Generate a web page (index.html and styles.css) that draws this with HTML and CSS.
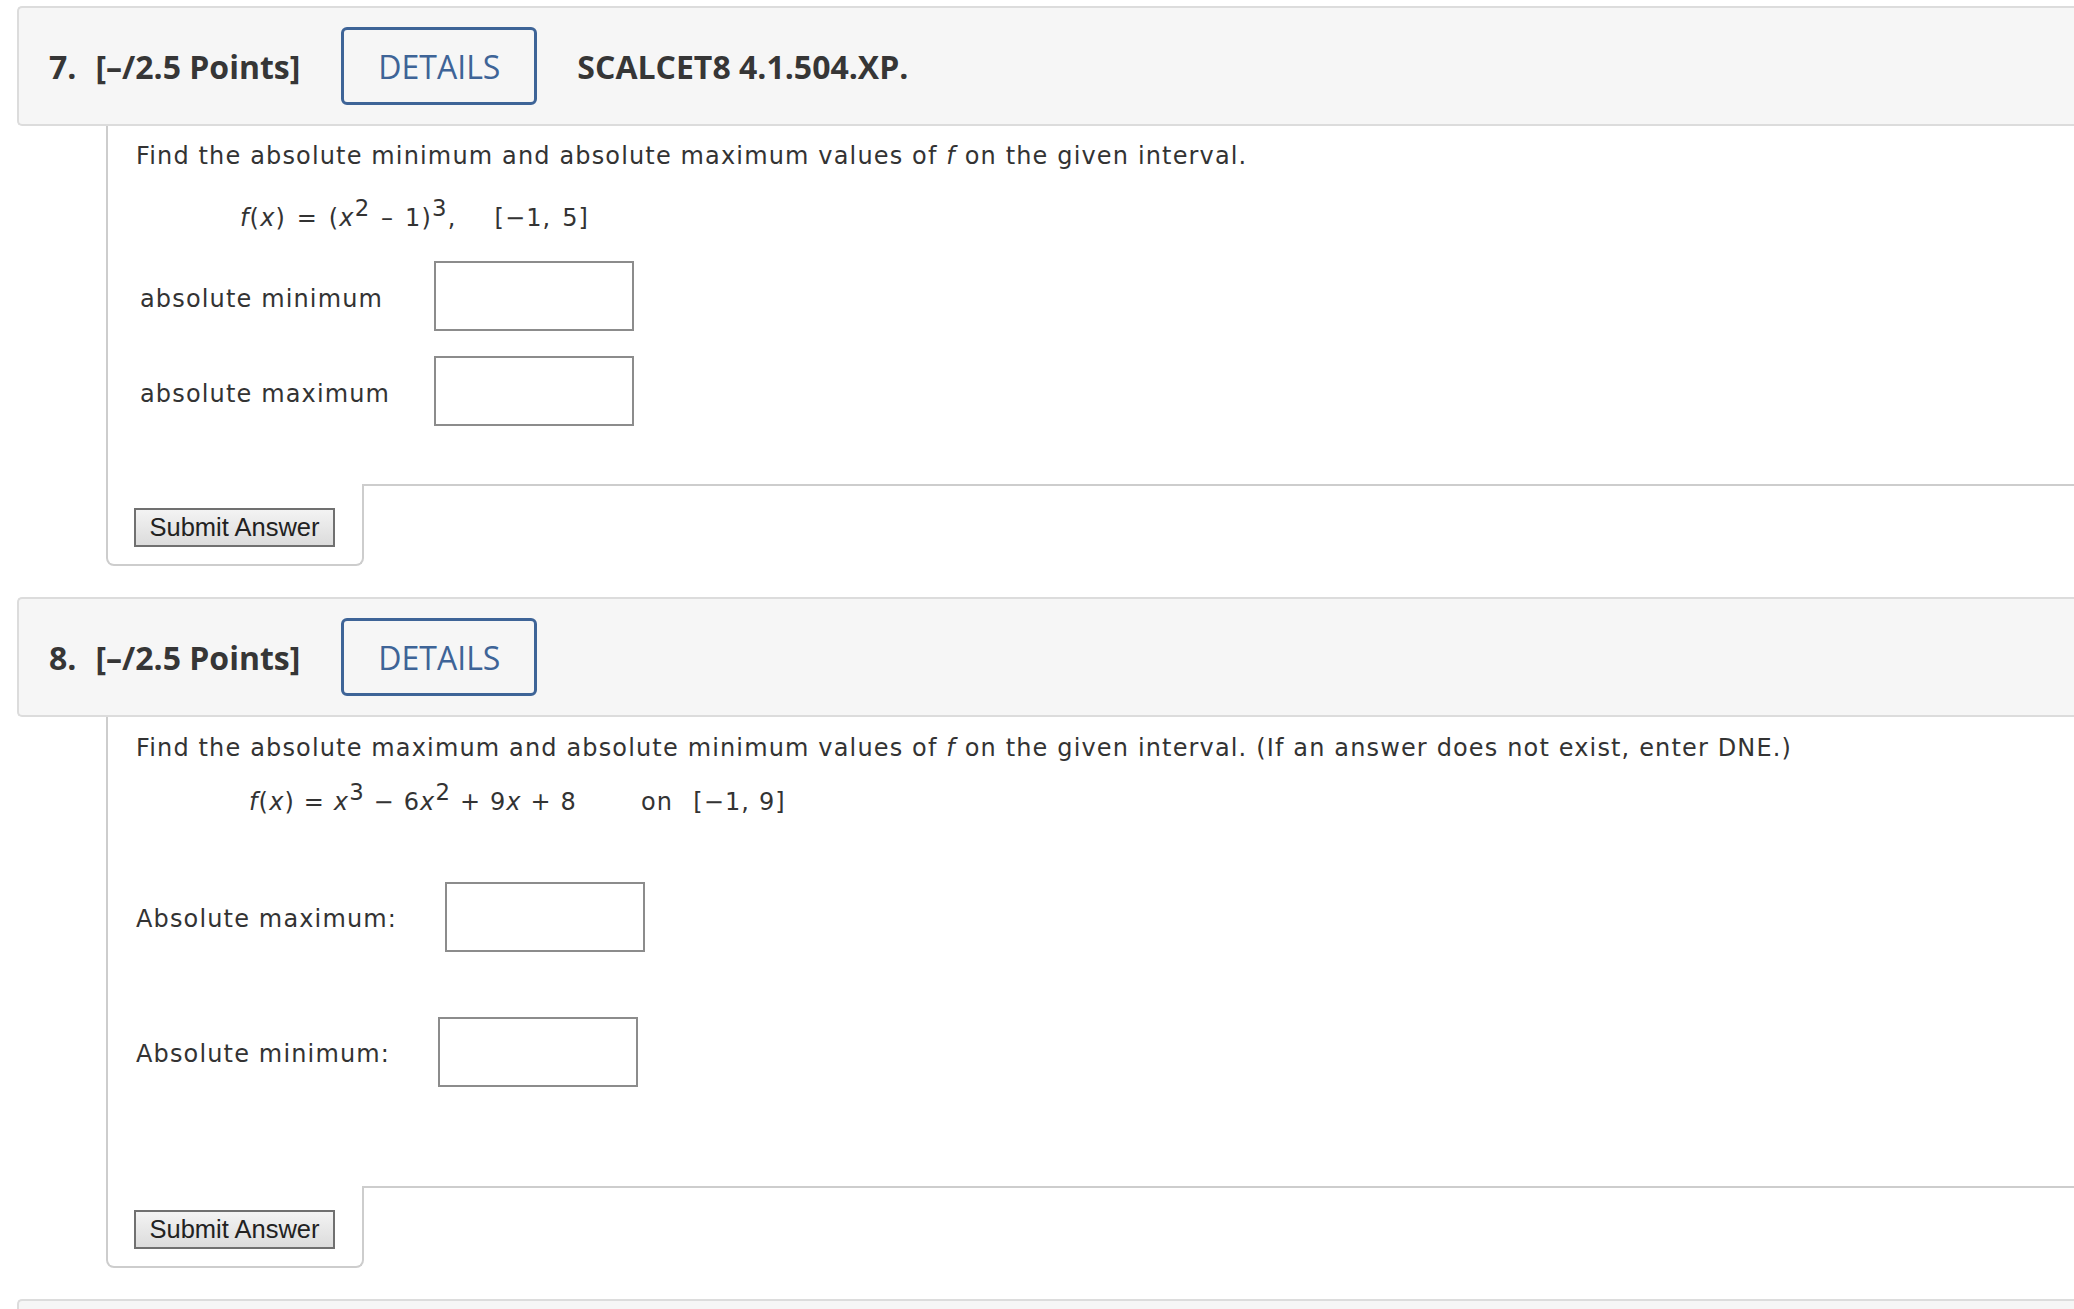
FILE: index.html
```html
<!DOCTYPE html>
<html lang="en">
<head>
  <meta charset="UTF-8" />
  <title>Assignment</title>
  <link rel="stylesheet" href="styles.css">
</head>
<body>

  <div class="question">
    <div class="qhead">
      <span class="qnum">7.</span>
      <span class="points">[&ndash;/2.5 Points]</span>
      <span class="details">DETAILS</span>
      <span class="ref">SCALCET8 4.1.504.XP.</span>
    </div>
    <div class="qbody">
      <div class="qtext q7">
        <p class="prompt">Find the absolute minimum and absolute maximum values of <i>f</i> on the given interval.</p>
        <p class="formula"><i>f</i>(<i>x</i>) = (<i>x</i><sup>2</sup> &ndash; 1)<sup>3</sup>,<span class="sep"></span>[&minus;1, 5]</p>
        <div class="answers">
          <label>absolute minimum</label>
          <input type="text" class="ans" />
          <label>absolute maximum</label>
          <input type="text" class="ans" />
        </div>
      </div>
      <div class="qfoot">
        <div class="tab"><button class="submit">Submit Answer</button></div>
        <div class="rest"></div>
      </div>
    </div>
  </div>

  <div class="question">
    <div class="qhead">
      <span class="qnum">8.</span>
      <span class="points">[&ndash;/2.5 Points]</span>
      <span class="details">DETAILS</span>
    </div>
    <div class="qbody">
      <div class="qtext q8">
        <p class="prompt">Find the absolute maximum and absolute minimum values of <i>f</i> on the given interval. (If an answer does not exist, enter DNE.)</p>
        <p class="formula"><i>f</i>(<i>x</i>) = <i>x</i><sup>3</sup> &minus; 6<i>x</i><sup>2</sup> + 9<i>x</i> + 8<span class="gap"></span>on<span class="sep2"></span>[&minus;1, 9]</p>
        <div class="line first">
          <label>Absolute maximum:</label>
          <input type="text" class="ans" />
        </div>
        <div class="line">
          <label>Absolute minimum:</label>
          <input type="text" class="ans" />
        </div>
      </div>
      <div class="qfoot">
        <div class="tab"><button class="submit">Submit Answer</button></div>
        <div class="rest"></div>
      </div>
    </div>
  </div>

  <!-- next question, only its top edge is on screen -->
  <div class="question">
    <div class="qhead"></div>
  </div>

</body>
</html>
```

FILE: styles.css
```css
html, body {
  overflow: hidden;
}

body {
  margin: 0;
  padding: 6px 0 0 17px;
  background: white;
  font-family: "DejaVu Sans", Verdana, sans-serif;
  color: #333;
}

.question {
  margin-bottom: 31px;
}

.qhead {
  display: flex;
  align-items: center;
  height: 116px;
  padding-left: 30px;
  background: #f6f6f6;
  border: 2px solid #dcdcdc;
  border-right: none;
  border-radius: 5px 0 0 5px;
  font-family: "Open Sans", sans-serif;
  font-size: 32px;
  color: #363636;
}

.qnum {
  font-weight: bold;
  margin-right: 19px;
}

.points {
  font-weight: bold;
}

.details {
  display: flex;
  align-items: center;
  justify-content: center;
  box-sizing: border-box;
  width: 196px;
  height: 78px;
  margin-left: 41px;
  border: 3px solid #3e6497;
  border-radius: 6px;
  color: #3e6497;
  background: #f6f6f6;
}

.ref {
  font-weight: bold;
  margin-left: 40px;
}

.qbody {
  margin-left: 89px;
}

.qtext {
  border-left: 2px solid #cdcdcd;
  padding-left: 28px;
  font-size: 24px;
  letter-spacing: 1.15px;
}

.qtext p {
  margin: 0;
  line-height: 30px;
}

.qtext i {
  font-style: italic;
}

sup {
  font-size: 0.95em;
  line-height: 0;
  vertical-align: 0.42em;
}

.sep {
  display: inline-block;
  width: 38px;
}

.gap {
  display: inline-block;
  width: 64px;
}

.sep2 {
  display: inline-block;
  width: 20px;
}

.ans {
  box-sizing: border-box;
  width: 200px;
  height: 70px;
  margin: 0;
  border: 2px solid #8c8c8c;
  background: white;
}

/* question 7 */
.q7 {
  padding-top: 15px;
  padding-bottom: 58px;
}

.q7 .formula {
  margin-top: 32px;
  padding-left: 104px;
  word-spacing: 2px;
}

.answers {
  display: grid;
  grid-template-columns: 298px 200px;
  row-gap: 25px;
  align-items: center;
  margin-top: 28px;
}

.answers label {
  padding: 6px 0 0 4px;
}

/* question 8 */
.q8 {
  padding-top: 16px;
  padding-bottom: 99px;
}

.q8 .formula {
  margin-top: 24px;
  padding-left: 113px;
}

.line {
  display: flex;
  align-items: center;
  margin-top: 65px;
}

.line label {
  padding-top: 4px;
}

.line .ans {
  margin-left: 48px;
}

/* submit tab */
.qfoot {
  display: flex;
}

.tab {
  width: 254px;
  height: 80px;
  border: 2px solid #cdcdcd;
  border-top: none;
  border-radius: 0 0 8px 8px;
}

.rest {
  flex: 1;
  border-top: 2px solid #cdcdcd;
}

.submit {
  display: block;
  box-sizing: border-box;
  width: 201px;
  height: 39px;
  margin: 24px 0 0 26px;
  padding: 0;
  border: 2px solid #707070;
  background: linear-gradient(#f3f3f3, #dcdcdc);
  font-family: "Liberation Sans", Arial, sans-serif;
  font-size: 25.5px;
  color: #222;
}
```
